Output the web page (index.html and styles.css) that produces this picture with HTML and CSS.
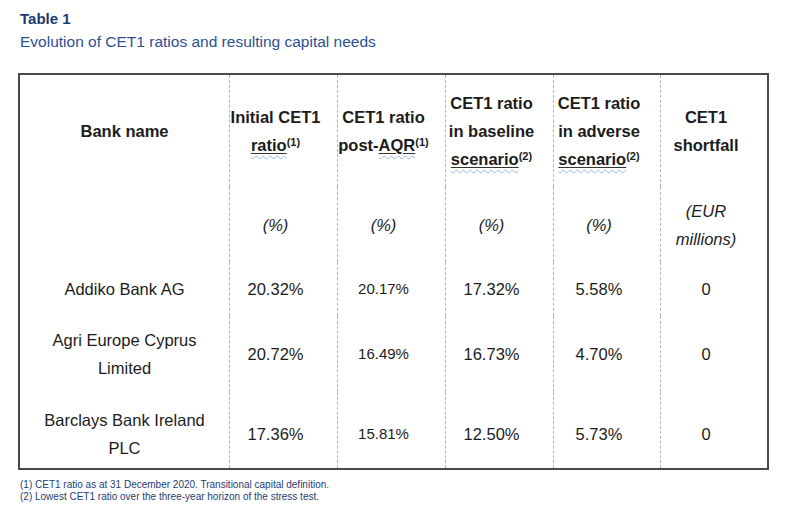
FILE: index.html
```html
<!DOCTYPE html>
<html lang="en">
<head>
<meta charset="utf-8">
<title>Table 1</title>
<link rel="stylesheet" href="styles.css">
</head>
<body>
<div class="page">
  <div class="title">Table 1</div>
  <div class="subtitle">Evolution of CET1 ratios and resulting capital needs</div>

  <div class="table">
    <div class="cell first head"><div>Bank name</div></div>
    <div class="cell head"><div>Initial CET1<br><span class="u"><span class="u2">ratio</span></span><sup>(1)</sup></div></div>
    <div class="cell head"><div>CET1 ratio<br>post-<span class="u"><span class="u2">AQR</span></span><sup>(1)</sup></div></div>
    <div class="cell head"><div>CET1 ratio<br>in baseline<br><span class="u"><span class="u2">scenario</span></span><sup>(2)</sup></div></div>
    <div class="cell head"><div>CET1 ratio<br>in adverse<br><span class="u"><span class="u2">scenario</span></span><sup>(2)</sup></div></div>
    <div class="cell head"><div>CET1<br>shortfall</div></div>

    <div class="cell first"></div>
    <div class="cell unit"><div>(%)</div></div>
    <div class="cell unit"><div>(%)</div></div>
    <div class="cell unit"><div>(%)</div></div>
    <div class="cell unit"><div>(%)</div></div>
    <div class="cell unit"><div>(EUR<br>millions)</div></div>

    <div class="cell first"><div>Addiko Bank AG</div></div>
    <div class="cell"><div>20.32%</div></div>
    <div class="cell small"><div>20.17%</div></div>
    <div class="cell"><div>17.32%</div></div>
    <div class="cell"><div>5.58%</div></div>
    <div class="cell"><div>0</div></div>

    <div class="cell first"><div>Agri Europe Cyprus<br>Limited</div></div>
    <div class="cell"><div>20.72%</div></div>
    <div class="cell small"><div>16.49%</div></div>
    <div class="cell"><div>16.73%</div></div>
    <div class="cell"><div>4.70%</div></div>
    <div class="cell"><div>0</div></div>

    <div class="cell first last"><div>Barclays Bank Ireland<br>PLC</div></div>
    <div class="cell last"><div>17.36%</div></div>
    <div class="cell small last"><div>15.81%</div></div>
    <div class="cell last"><div>12.50%</div></div>
    <div class="cell last"><div>5.73%</div></div>
    <div class="cell last"><div>0</div></div>
  </div>

  <div class="notes">
    <div>(1) CET1 ratio as at 31 December 2020. Transitional capital definition.</div>
    <div>(2) Lowest CET1 ratio over the three-year horizon of the stress test.</div>
  </div>
</div>
</body>
</html>
```

FILE: styles.css
```css
html, body {
  margin: 0;
  padding: 0;
  background: #ffffff;
}

body {
  font-family: "Liberation Sans", Arial, sans-serif;
  color: #1c1c1c;
}

.page {
  width: 800px;
  height: 519px;
  overflow: hidden;
}

.title {
  margin: 10px 0 0 20px;
  font-size: 15px;
  font-weight: bold;
  line-height: 18px;
  color: #1b3a6c;
}

.subtitle {
  margin: 5px 0 0 20px;
  font-size: 15.5px;
  line-height: 18px;
  color: #2c5191;
}

.table {
  margin: 22px 0 0 18px;
  width: 747px;
  border: 2px solid #4a4a4a;
  display: grid;
  grid-template-columns: 209px 108px 108px 108px 107px 107px;
  grid-template-rows: 112px 75px 54px 76px 76px;
  font-size: 16.5px;
  line-height: 28px;
}

.cell {
  display: flex;
  align-items: center;
  justify-content: center;
  text-align: center;
  padding: 0 16px 0 0;
  border-left: 1px dashed #b4b4b4;
}

.cell.first {
  border-left: none;
  padding: 0;
}

.cell.last {
  padding-top: 7px;
}

.head {
  font-weight: bold;
}

.unit {
  font-style: italic;
}

.small {
  font-size: 15px;
}

.u {
  text-decoration: underline wavy #9ab6dc;
  text-decoration-thickness: 1px;
  text-underline-offset: 4px;
}

.u2 {
  text-decoration: underline solid #333333;
  text-decoration-thickness: 1px;
  text-underline-offset: 2px;
}

sup {
  font-size: 11px;
  line-height: 0;
  vertical-align: 5px;
}

.notes {
  margin: 9px 0 0 20px;
  font-size: 10px;
  line-height: 12px;
  color: #1f3d73;
}
```
